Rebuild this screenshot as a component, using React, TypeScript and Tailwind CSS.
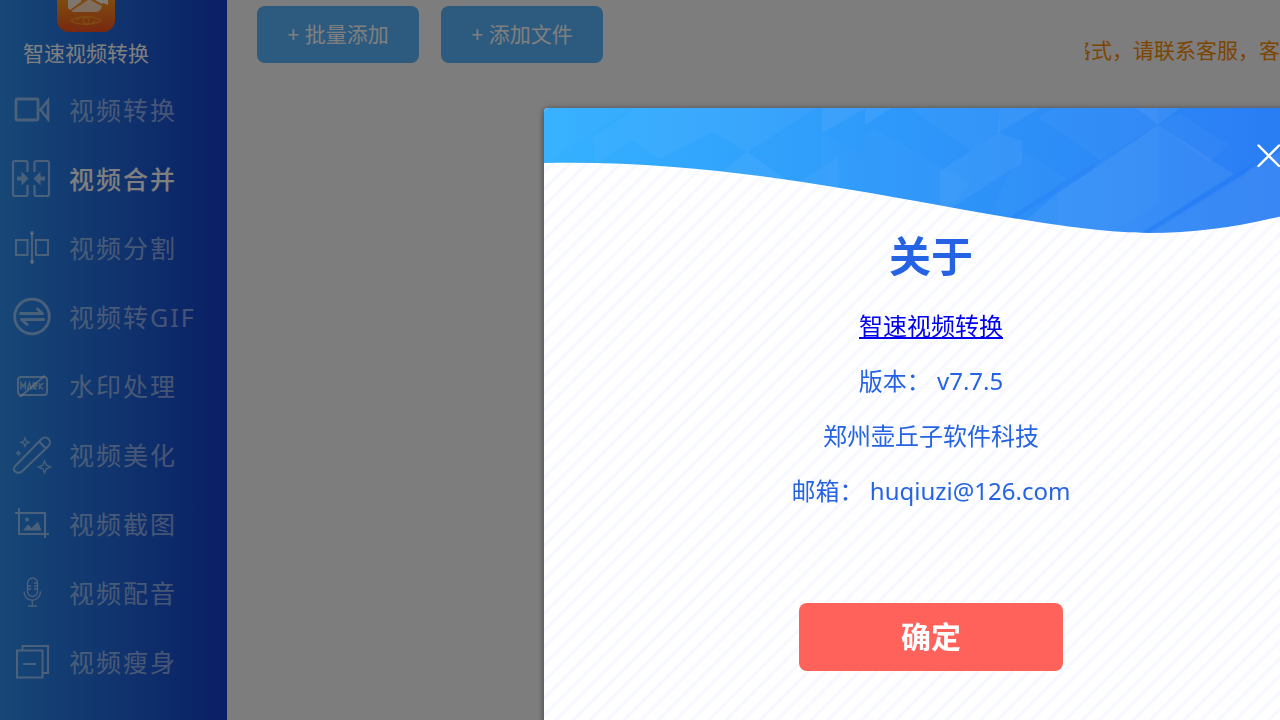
import React, { useState } from "react";

type IconProps = { children: React.ReactNode };
function Icon({ children }: IconProps): React.ReactNode {
  return (
    <svg
      viewBox="0 1 38 38"
      className="size-[38px] shrink-0 overflow-visible"
      fill="none"
      stroke="currentColor"
      strokeWidth="2"
      aria-hidden="true"
    >
      {children}
    </svg>
  );
}

const items = [
  {
    label: "视频转换",
    icon: (
      <Icon>
        <rect x="3" y="8" width="22" height="21" rx="1.5" strokeWidth="2.8" />
        <path d="M35 9.5v18.5l-7.5-9.2z" strokeWidth="2.6" />
      </Icon>
    ),
  },
  {
    label: "视频合并",
    icon: (
      <Icon>
        <path
          d="M14.500 12V3a2 2 0 0 0-2-2H2a2 2 0 0 0-2 2v31a2 2 0 0 0 2 2h10.500a2 2 0 0 0 2-2v-9M21.500 12V3a2 2 0 0 1 2-2H34a2 2 0 0 1 2 2v31a2 2 0 0 1-2 2H23.500a2 2 0 0 1-2-2v-9"
          strokeWidth="2.200"
        />
        <path
          d="M4 16.500h4.500v-5l7 7-7 7v-5H4zM32 16.500h-4.500v-5l-7 7 7 7v-5H32z"
          fill="currentColor"
          stroke="none"
        />
      </Icon>
    ),
  },
  {
    label: "视频分割",
    icon: (
      <Icon>
        <path d="M3 11h11.500v15H3zM23 11h12v15H23zM19 4v30" strokeWidth="2" />
        <circle cx="19" cy="4" r="2" fill="currentColor" stroke="none" />
        <circle cx="19" cy="33" r="2" fill="currentColor" stroke="none" />
      </Icon>
    ),
  },
  {
    label: "视频转GIF",
    icon: (
      <Icon>
        <circle cx="19" cy="18.5" r="17.3" strokeWidth="2.8" />
        <path
          d="M7.5 15.5h22l-5-4.5M30.500 21.500h-22l5.500 5"
          strokeWidth="3"
          strokeLinecap="round"
          strokeLinejoin="round"
        />
      </Icon>
    ),
  },
  {
    label: "水印处理",
    icon: (
      <Icon>
        <rect x="5" y="10" width="29" height="18" rx="3" />
        <path d="M7 30 32 8.500" />
        <path
          d="M8 22.500v-6.500l2.200 3.500 2.200-3.500v6.500M14.500 22.500l2-6.500 2 6.500M20.500 22.500v-6.500h3v3h-3l3 3.500M26.500 16v6.500M30.500 16l-4 3.300 4 3.200"
          strokeWidth="1.600"
        />
      </Icon>
    ),
  },
  {
    label: "视频美化",
    icon: (
      <Icon>
        <path d="M1.800 30.500 28.500 3a4.800 4.800 0 0 1 7 7L9 35.500c-5 3.500-10-1-7.200-5zM26 5.500l7 7" />
        <path
          d="M12 2l1.200 3 3 1.200-3 1.200L12 10.500l-1.200-3.100-3-1.200 3-1.200zM31.500 25l1.800 4.200 4.200 1.800-4.200 1.800-1.800 4.200-1.800-4.200-4.200-1.800 4.200-1.800zM5.500 15.500l1.700 1.700-1.700 1.700-1.700-1.700z"
          strokeWidth="1.300"
        />
      </Icon>
    ),
  },
  {
    label: "视频截图",
    icon: (
      <Icon>
        <path d="M6 3v26h30M2 8h30v25" />
        <circle cx="14" cy="14.500" r="2" fill="currentColor" stroke="none" />
        <path
          d="M10 25.500l5-6 3.500 3.500 6.500-6.500 3.500 9z"
          fill="currentColor"
          stroke="none"
        />
      </Icon>
    ),
  },
  {
    label: "视频配音",
    icon: (
      <Icon>
        <g strokeWidth="1.300">
          <rect x="14.500" y="4" width="10" height="18.500" rx="5" />
          <path d="M11 17.500c0 11.500 16.500 11.500 16.500 0M19.300 26v5.500M15 32h9M15 12h3M15 15h3M21 12h3M21 15h3M21 9h3" />
        </g>
      </Icon>
    ),
  },
  {
    label: "视频瘦身",
    icon: (
      <Icon>
        <path d="M4 7.500h25.500v27H4zM9.500 7.500V3H35v27h-5.500M10 21h13" />
      </Icon>
    ),
  },
];

function Logo(): React.ReactNode {
  return (
    <svg viewBox="0 26 58 32" className="h-8 w-[58px]" aria-hidden="true">
      <defs>
        <linearGradient id="logo" x1="0" y1="0" x2="0" y2="1">
          <stop offset="0.400" stopColor="#ff9d1e" />
          <stop offset="1" stopColor="#f0501e" />
        </linearGradient>
      </defs>
      <rect width="58" height="58" rx="12" fill="url(#logo)" />
      <path d="M11 20h13v8l-11 8-2-2z" fill="#fff" opacity="0.850" />
      <path d="M38 20h13v11l-5-2-1 1-7-4z" fill="#fff" opacity="0.900" />
      <path d="M14 37l17-11h2l12 6c-1 4-3 6-6 6H16z" fill="#fff" opacity="0.700" />
      <g fill="none" stroke="#ffa52a" strokeWidth="1.600" opacity="0.700">
        <path d="M14 46.500c6-5 24-5 30 0-6 5-24 5-30 0z" />
        <circle cx="29" cy="46.500" r="3" />
        <path d="M20 46.500c2-3 5-4 9-4M38 46.500c-2 3-5 4-9 4" />
      </g>
    </svg>
  );
}

function Sidebar(): React.ReactNode {
  const [active, setActive] = useState("视频合并");

  return (
    <aside className="w-[227px] shrink-0 bg-linear-to-r from-[#2e8eee] via-[#2268dc] to-[#163ccb]">
      <div className="flex h-[76px] w-[172px] flex-col items-center gap-1 text-[21px] leading-[34px] text-white">
        <Logo />
        智速视频转换
      </div>
      <nav className="flex flex-col">
        {items.map(({ label, icon }) => (
          <button
            key={label}
            type="button"
            onClick={() => setActive(label)}
            className="flex h-[69px] items-center gap-[18px] pl-[13px] text-[25px] text-white/50"
          >
            {icon}
            <span
              className={
                label === active
                  ? "font-medium tracking-[2px] text-white"
                  : "tracking-[2px]"
              }
            >
              {label}
            </span>
          </button>
        ))}
      </nav>
    </aside>
  );
}

function Toolbar(): React.ReactNode {
  return (
    <div className="flex pt-1.5 pl-[30px]">
      <div className="flex gap-[22px] text-[21px] text-white">
        <button type="button" className="h-[57px] w-[162px] rounded-lg bg-[#5ab4ff]">
          + 批量添加
        </button>
        <button type="button" className="h-[57px] w-[162px] rounded-lg bg-[#5ab4ff]">
          + 添加文件
        </button>
      </div>
      {/* Scrolling notice */}
      <div className="mt-7 ml-auto flex w-[195px] justify-end overflow-hidden text-[21px] leading-8 text-[#fa8c00]">
        <p className="shrink-0 whitespace-nowrap">格式，请联系客服，客</p>
      </div>
    </div>
  );
}

function Wave(): React.ReactNode {
  return (
    <svg
      viewBox="0 0 774 126"
      className="absolute inset-x-0 top-0 w-full rounded-t-sm"
      aria-hidden="true"
    >
      <defs>
        <linearGradient id="sky">
          <stop offset="0" stopColor="#35b1ff" />
          <stop offset="0.450" stopColor="#2e98fa" />
          <stop offset="0.750" stopColor="#2c88f6" />
          <stop offset="1" stopColor="#297af3" />
        </linearGradient>
        <clipPath id="wave">
          <path d="M0 0H774V97C725 114 665 125 605 125S450 107 366 92C262 74 140 52 0 55z" />
        </clipPath>
      </defs>
      <g clipPath="url(#wave)">
        <path d="M0 0h774v126H0z" fill="url(#sky)" />
        <g fill="#fff">
          <path d="M0 0h88L0 55z" opacity="0.020" />
          <path d="M49 30 88 2v30L52 56z" opacity="0.030" />
          <path d="M88 0h184l-69 44-34-20-54 27-27-19z" opacity="0.040" />
          <path d="M203 44l40 28h-76z" opacity="0.050" />
          <path d="M278 0h44l-44 25zM321 17V0h27z" opacity="0.060" />
          <path d="M256 73l38-24v40z" opacity="0.040" />
          <path d="M278 25l43 22v35l-43-6zM329 20l98 55-30 35-76-20V30z" opacity="0.020" />
          <path d="M366 0h90v25l-29 18z" opacity="0.030" />
          <path d="M456 0h40l-42 25z" opacity="0.050" />
          <path d="M396 63l58-38 24 8v22l-82 52z" opacity="0.050" />
          <path d="M478 41l46 30-58 38-20-6z" opacity="0.020" />
          <path d="M494 9l16-9h104v17l-58 35z" opacity="0.030" />
          <path d="M592 0h44l-22 17z" opacity="0.060" />
          <path d="M614 17l76 49-95 60H465l48-40z" opacity="0.060" />
          <path d="M513 80l101-63v80l-50 29h-51z" opacity="0.020" />
          <path d="M636 6l50 31-21 17-51-37z" opacity="0.030" />
          <path d="M774 20v106H602z" opacity="0.070" />
        </g>
        <path
          d="M469 107l87-55-8 10-79 50zM601 124l108-69-8 12-94 58z"
          fill="#1c74f4"
          opacity="0.200"
        />
      </g>
    </svg>
  );
}

function AboutDialog(): React.ReactNode {
  return (
    <div className="fixed inset-0 flex overflow-hidden bg-black/50 pt-[108px] pl-[544px]">
      <section
        role="dialog"
        aria-labelledby="about-title"
        className="relative flex w-[774px] shrink-0 flex-col items-center self-start rounded-sm bg-white bg-[repeating-linear-gradient(135deg,#ffffff_0px,#ffffff_7px,#f6f8ff_9px,#f6f8ff_10px,#ffffff_12px)] pt-[119px] pb-16 text-2xl text-[#2563e4] shadow-[0_1px_6px_rgba(0,0,0,0.500)]"
      >
        <Wave />
        <button
          type="button"
          aria-label="关闭"
          className="absolute top-9 right-[38px] size-6 text-white"
        >
          <svg
            viewBox="0 0 24 24"
            fill="none"
            stroke="currentColor"
            strokeWidth="2.400"
            strokeLinecap="round"
          >
            <path d="M2.500 1.500l20.500 20.500M23 1.500l-20.500 20.500" />
          </svg>
        </button>
        <h1 id="about-title" className="text-[42px] leading-[58px] font-bold">
          关于
        </h1>
        <div className="mt-[13px] flex flex-col items-center leading-[55px]">
          <a href="#" className="text-[#0000ee] underline">
            智速视频转换
          </a>
          <p>版本： v7.7.5</p>
          <p>郑州壶丘子软件科技</p>
          <p>邮箱： huqiuzi@126.com</p>
        </div>
        <button
          type="button"
          className="mt-[85px] h-[68px] w-[264px] rounded-lg bg-[#ff625b] text-3xl font-bold text-white"
        >
          确定
        </button>
      </section>
    </div>
  );
}

export default function App(): React.ReactNode {
  return (
    <div className="flex h-screen overflow-hidden bg-[#fafafa] font-['Noto_Sans','Noto_Sans_CJK_SC',sans-serif]">
      <Sidebar />
      <main className="min-w-0 flex-1">
        <Toolbar />
      </main>
      <AboutDialog />
    </div>
  );
}
